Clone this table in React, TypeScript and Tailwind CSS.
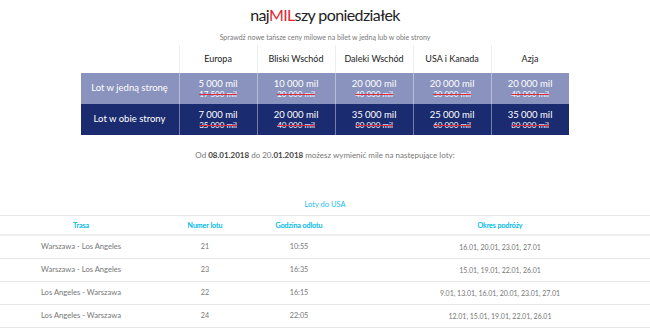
import React from "react";

const regions = ["Europa", "Bliski Wschód", "Daleki Wschód", "USA i Kanada", "Azja"];
const oneWay = [
  ["5 000 mil", "17 500 mil"],
  ["10 000 mil", "20 000 mil"],
  ["20 000 mil", "40 000 mil"],
  ["20 000 mil", "30 000 mil"],
  ["20 000 mil", "40 000 mil"],
];
const both = [
  ["7 000 mil", "35 000 mil"],
  ["20 000 mil", "40 000 mil"],
  ["35 000 mil", "80 000 mil"],
  ["25 000 mil", "60 000 mil"],
  ["35 000 mil", "80 000 mil"],
];
const flights = [
  ["Warszawa - Los Angeles", "21", "10:55", "16.01, 20.01, 23.01, 27.01"],
  ["Warszawa - Los Angeles", "23", "16:35", "15.01, 19.01, 22.01, 26.01"],
  ["Los Angeles - Warszawa", "22", "16:15", "9.01, 13.01, 16.01, 20.01, 23.01, 27.01"],
  ["Los Angeles - Warszawa", "24", "22:05", "12.01, 15.01, 19.01, 22.01, 26.01"],
];

function PriceCell({ v, old }: { v: string; old: string }) {
  return (
    <div className="flex flex-col items-center justify-center border-l border-white/40 text-white">
      <span className="text-[9.5px] leading-[10px]">{v}</span>
      <span className="text-[8px] leading-[10px] line-through decoration-[#e0283a] decoration-[1px]">{old}</span>
    </div>
  );
}

export default function App() {
  return (
    <div className="w-[650px] h-[328px] overflow-hidden bg-white flex flex-col items-center" style={{ fontFamily: "Lato, 'Open Sans', sans-serif" }}>
      <div className="pt-[5px] text-[16px] leading-[20px] tracking-[-0.6px] text-[#222]">
        naj<span className="text-[#e3262f]">MIL</span>szy poniedziałek
      </div>
      <div className="mt-[7px] text-[7px] leading-[10px] text-[#777]">
        Sprawdź nowe tańsze ceny milowe na bilet w jedną lub w obie strony
      </div>
      <div className="mt-[3px] w-[489px] grid grid-cols-[98px_repeat(5,78px)]">
        <div className="h-[28px]" />
        {regions.map((r) => (
          <div key={r} className="h-[28px] flex items-center justify-center text-[9px] text-[#222] border-l border-[#eeeeee]">
            {r}
          </div>
        ))}
        <div className="h-[31px] bg-[#8a93be] flex items-center justify-center text-white text-[9.5px]">Lot w jedną stronę</div>
        {oneWay.map(([v, o], i) => (
          <div key={i} className="h-[31px] bg-[#8a93be] grid">
            <PriceCell v={v} old={o} />
          </div>
        ))}
        <div className="h-[31px] bg-[#1b2b6f] flex items-center justify-center text-white text-[9.5px]">Lot w obie strony</div>
        {both.map(([v, o], i) => (
          <div key={i} className="h-[31px] bg-[#1b2b6f] grid">
            <PriceCell v={v} old={o} />
          </div>
        ))}
      </div>
      <div className="mt-[15px] text-[8px] leading-[10px] text-[#777]">
        Od <b className="text-[#444]">08.01.2018</b> do 20<b className="text-[#444]">.01.2018</b> możesz wymienić mile na następujące loty:
      </div>
      <div className="mt-[40px] text-[7.5px] leading-[10px] text-[#1cc0ea]">Loty do USA</div>
      <div className="mt-[5px] w-[650px] border-t border-[#e8e8e8]">
        <div className="grid grid-cols-[162px_86px_102px_300px] h-[20px] items-center text-[7px] text-[#1cc0ea] border-b-2 border-[#eeeeee]" style={{ textShadow: "0 0 0.3px #1cc0ea" }}>
          <div className="text-center">Trasa</div>
          <div className="text-center">Numer lotu</div>
          <div className="text-center">Godzina odlotu</div>
          <div className="text-center">Okres podróży</div>
        </div>
        {flights.map((f, i) => (
          <div key={i} className="grid grid-cols-[162px_86px_102px_300px] h-[23px] items-center text-[#777] border-b border-[#e6e6e6]">
            <div className="text-center text-[7.6px]">{f[0]}</div>
            <div className="text-center text-[7.2px]">{f[1]}</div>
            <div className="text-center text-[7.2px]">{f[2]}</div>
            <div className="text-center text-[7px]">{f[3]}</div>
          </div>
        ))}
      </div>
    </div>
  );
}
